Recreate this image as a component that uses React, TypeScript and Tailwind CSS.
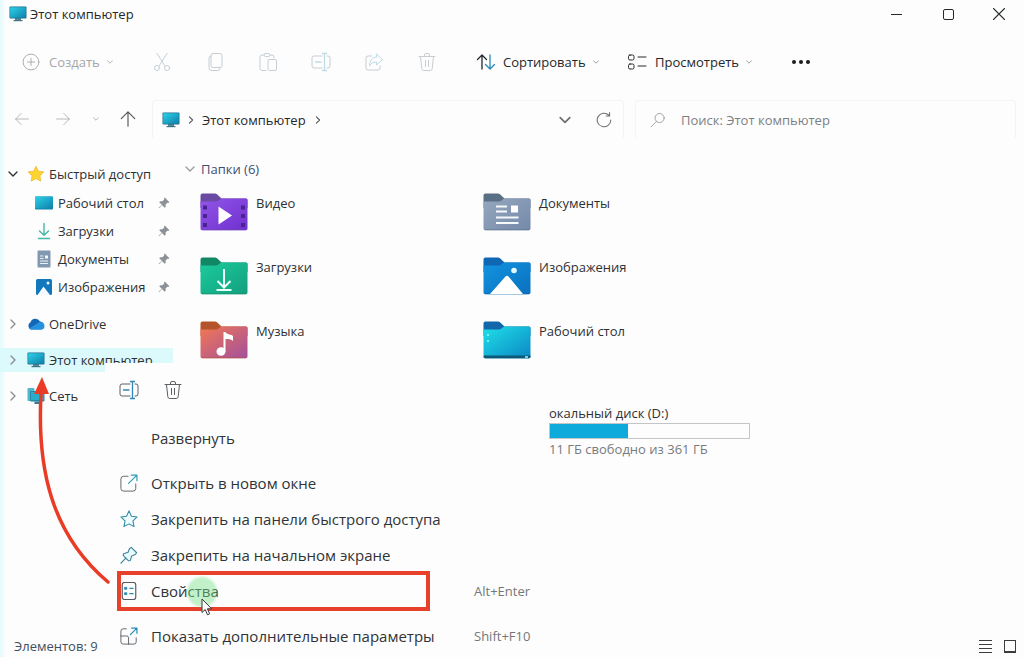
import type { ReactNode } from 'react';

type IconProps = { className?: string };

function Glyph({ className = 'size-5', children }: { className?: string; children: ReactNode }) {
  return (
    <svg viewBox="0 0 20 20" className={`shrink-0 ${className}`} fill="none" stroke="currentColor" strokeLinecap="round" strokeLinejoin="round" aria-hidden="true">
      {children}
    </svg>
  );
}

function Chevron({ className = 'size-2' }: IconProps) {
  return (
    <svg viewBox="0 0 10 10" className={`shrink-0 ${className}`} fill="none" stroke="currentColor" strokeWidth="1.4" strokeLinecap="round" strokeLinejoin="round" aria-hidden="true">
      <path d="M1 3l4 4 4-4" />
    </svg>
  );
}

function ChevronRight({ className = 'size-2.5' }: IconProps) {
  return (
    <svg viewBox="0 0 10 10" className={`shrink-0 ${className}`} fill="none" stroke="currentColor" strokeWidth="1.4" strokeLinecap="round" strokeLinejoin="round" aria-hidden="true">
      <path d="M3 1l4 4-4 4" />
    </svg>
  );
}

function RenameIcon({ accent = '#2f86b5' }: { accent?: string }) {
  return (
    <Glyph>
      <path d="M11 4H3a2 2 0 0 0-2 2v8a2 2 0 0 0 2 2h8M16 4h1a2 2 0 0 1 2 2v8a2 2 0 0 1-2 2h-1" />
      <path d="M4.500 10H10M13.500 1.500v17M11.500 1.500h4M11.500 18.500h4" stroke={accent} strokeWidth="1.300" />
    </Glyph>
  );
}

function TrashIcon() {
  return (
    <Glyph>
      <path d="M2 4.500h16M7.500 4.500V3a1.500 1.500 0 0 1 1.500-1.500h2A1.500 1.500 0 0 1 12.500 3v1.500M3.500 4.500l1.300 12.200A2 2 0 0 0 6.800 18.500h6.400a2 2 0 0 0 2-1.800l1.300-12.200M8.500 8.500v6M11.500 8.500v6" />
    </Glyph>
  );
}

function MonitorIcon({ className = 'size-[18px]' }: IconProps) {
  return (
    <svg viewBox="0 0 18 18" className={`shrink-0 ${className}`} aria-hidden="true">
      <defs>
        <linearGradient id="screen" x1="0" y1="0" x2="1" y2="1">
          <stop offset="0" stopColor="#2ad2ea" />
          <stop offset="1" stopColor="#0f7fa8" />
        </linearGradient>
      </defs>
      <path d="M6 13h6v2.500H6z" fill="#5b8794" />
      <path d="M4.500 15h9v1.200h-9z" fill="#3f7486" />
      <rect x="0.500" y="1.500" width="17" height="12" rx="1" fill="#216f89" />
      <rect x="1.200" y="2.200" width="15.600" height="10.600" rx="0.500" fill="url(#screen)" />
    </svg>
  );
}

function StarFilledIcon() {
  return (
    <svg viewBox="0 0 18 18" className="size-[18px] shrink-0" aria-hidden="true">
      <path d="M9 1.200l2.400 5 5.500.7-4 3.800 1 5.500L9 13.600l-4.900 2.600 1-5.500-4-3.800 5.500-.7z" fill="#fbd42f" stroke="#efbd3a" strokeWidth="0.800" strokeLinejoin="round" />
    </svg>
  );
}

function DesktopIcon() {
  return (
    <svg viewBox="0 0 18 18" className="size-[18px] shrink-0" aria-hidden="true">
      <rect x="0" y="2.500" width="18" height="13" rx="1" fill="#1284ad" />
      <rect x="0" y="2.500" width="18" height="12" rx="1" fill="url(#screen)" />
    </svg>
  );
}

function DownloadIcon() {
  return (
    <svg viewBox="0 0 18 18" className="size-[18px] shrink-0" fill="none" stroke="#42b9a3" strokeWidth="1.400" strokeLinecap="round" strokeLinejoin="round" aria-hidden="true">
      <path d="M9 1.500v11.500M4.500 9L9 13.200 13.500 9M3.500 16.500h11" />
    </svg>
  );
}

function DocumentIcon() {
  return (
    <svg viewBox="0 0 18 18" className="size-[18px] shrink-0" aria-hidden="true">
      <rect x="2.500" y="0.500" width="13" height="17" rx="1" fill="#8298b0" />
      <path d="M5 6h3.500M5 8.500h3.500M5 11h8M5 13.500h8" stroke="#e8eef5" />
      <rect x="10" y="5.500" width="3" height="3" fill="#f4f8fc" />
    </svg>
  );
}

function PictureIcon() {
  return (
    <svg viewBox="0 0 18 18" className="size-[18px] shrink-0" aria-hidden="true">
      <rect x="1" y="1" width="16" height="16" rx="1.500" fill="#1377bd" />
      <path d="M2.500 17L8.500 8.500 15 17z" fill="#f2faff" />
      <circle cx="13" cy="5" r="1.500" fill="#f2faff" />
    </svg>
  );
}

function CloudIcon() {
  return (
    <svg viewBox="0 0 18 18" className="size-[18px] shrink-0" aria-hidden="true">
      <path d="M4 14.500a4 4 0 0 1-.5-7.300A5.200 5.200 0 0 1 13 6.500a4.200 4.200 0 0 1 1.500 8z" fill="#1466b8" />
      <path d="M2 13.500l9-5.500a4 4 0 0 1 6.500 3.500 3.300 3.300 0 0 1-3 3H4a3.500 3.500 0 0 1-2-1z" fill="#2492df" />
    </svg>
  );
}

function NetworkIcon() {
  return (
    <svg viewBox="0 0 18 18" className="size-[18px] shrink-0" aria-hidden="true">
      <rect x="0.500" y="1" width="7" height="13" rx="1" fill="#52b6cd" />
      <rect x="3" y="4" width="14.500" height="10.500" rx="1" fill="#2389a6" />
      <rect x="4" y="5" width="12.500" height="8" fill="#27aecb" />
      <path d="M7.500 14.500h5.500V17H7.500z" fill="#397c90" />
    </svg>
  );
}

function PinnedIcon() {
  return (
    <svg viewBox="0 0 12 12" className="size-3 shrink-0" aria-hidden="true">
      <path d="M6.800.6l4.600 4.600-1.200.8-.9-.2-1.700 1.700.1 2.200-1 1-2.700-2.700L1 11.200l-.4-.4L3.800 7.800 1.200 5.200l1-1 2.300.1L6.200 2.600 6 1.600z" fill="#8c9298" />
    </svg>
  );
}

function FolderIcon({ id, tab, from, to, children }: { id: string; tab: string; from: string; to: string; children?: ReactNode }) {
  return (
    <svg viewBox="0 0 48 38" className="h-[38px] w-12 shrink-0" aria-hidden="true">
      <defs>
        <linearGradient id={id} x1="0" y1="0" x2="1" y2="1">
          <stop offset="0" stopColor={from} />
          <stop offset="1" stopColor={to} />
        </linearGradient>
      </defs>
      <path d="M0.500 2.500a2 2 0 0 1 2-2H15a3 3 0 0 1 2 .8L21.500 5.500H46a1.500 1.500 0 0 1 1.500 1.500v8H.5z" fill={tab} />
      <path d="M.5 8.500h15.500a4 4 0 0 0 2.500-.9L21 5.500h25A1.500 1.500 0 0 1 47.500 7v28.500A1.800 1.800 0 0 1 45.700 37.300H2.300A1.800 1.800 0 0 1 .5 35.500z" fill={`url(#${id})`} />
      <path d="M1 36.200a1.800 1.800 0 0 0 1.300 1.100h43.400a1.800 1.800 0 0 0 1.300-1.100z" fill={tab} opacity="0.6" />
      {children}
    </svg>
  );
}

const quickAccess = [
  { label: 'Рабочий стол', icon: <DesktopIcon /> },
  { label: 'Загрузки', icon: <DownloadIcon /> },
  { label: 'Документы', icon: <DocumentIcon /> },
  { label: 'Изображения', icon: <PictureIcon /> },
];

const roots = [
  { label: 'OneDrive', icon: <CloudIcon />, selected: false },
  { label: 'Этот компьютер', icon: <MonitorIcon />, selected: true },
  { label: 'Сеть', icon: <NetworkIcon />, selected: false },
];

const folders = [
  {
    label: 'Видео',
    icon: (
      <FolderIcon id="video" tab="#6b4aa3" from="#9256e6" to="#6f2fd0">
        <path d="M18.500 13.500v18L32 22.500z" fill="#fff" />
        <path d="M3 12.500h4v4H3zM3 21h4v4H3zM3 30h4v4H3zM41 12.500h4v4h-4zM41 21h4v4h-4zM41 30h4v4h-4z" fill="#4a2391" />
      </FolderIcon>
    ),
  },
  {
    label: 'Документы',
    icon: (
      <FolderIcon id="documents" tab="#596f83" from="#96a8bd" to="#7488ab">
        <path d="M13 13.500h11M13 18.500h11M13 24.500h22.500M13 30h22.500" stroke="#f6f9fc" strokeWidth="2" />
        <path d="M28 12.500h7v7h-7z" fill="#fff" />
      </FolderIcon>
    ),
  },
  {
    label: 'Загрузки',
    icon: (
      <FolderIcon id="downloads" tab="#128766" from="#1bcb9c" to="#139f7e">
        <path d="M24 12v18M17.500 24l6.500 6.500 6.500-6.500M16.500 33h15" fill="none" stroke="#eafff8" strokeWidth="2" />
      </FolderIcon>
    ),
  },
  {
    label: 'Изображения',
    icon: (
      <FolderIcon id="pictures" tab="#0f66b3" from="#1294e0" to="#0b70bd">
        <path d="M7 37l15.500-17.500a2 2 0 0 1 3 0L40 37z" fill="#fff" />
        <circle cx="31" cy="13.500" r="2.800" fill="#e4f8ff" />
      </FolderIcon>
    ),
  },
  {
    label: 'Музыка',
    icon: (
      <FolderIcon id="music" tab="#b5532a" from="#f27752" to="#a2509f">
        <ellipse cx="21" cy="30.500" rx="4.500" ry="4.300" fill="#fff" />
        <path d="M23.500 11h2c1 3 6.500 2 7.500 4v5c-2-2-5-2-7.500-2v12.500h-2z" fill="#fff" />
      </FolderIcon>
    ),
  },
  {
    label: 'Рабочий стол',
    icon: (
      <FolderIcon id="desktop" tab="#1167a9" from="#1fe0e8" to="#0b86c4">
        <path d="M1 34.500h46.500v1.300a1.600 1.600 0 0 1-1.600 1.500H2.100A1.600 1.600 0 0 1 .5 35.800z" fill="#0d5877" />
        <path d="M4 14h2M4 20h2M42 36h3" stroke="#9ffaf6" strokeWidth="1.500" />
      </FolderIcon>
    ),
  },
];

const menuItems = [
  {
    label: 'Открыть в новом окне',
    icon: (
      <Glyph className="size-[18px]">
        <path d="M9 2.500H4a3 3 0 0 0-3 3V16a3 3 0 0 0 3 3h10.500a3 3 0 0 0 3-3v-5" />
        <path d="M9.500 10.500L18.500 1.500M12.500 1.200h6.300v6.300" stroke="#2f9db5" strokeWidth="1.300" />
      </Glyph>
    ),
  },
  {
    label: 'Закрепить на панели быстрого доступа',
    icon: (
      <Glyph className="size-[18px]">
        <path d="M10 1l2.700 5.900 6.300.8-4.600 4.400 1.200 6.400L10 15.400l-5.600 3.100 1.200-6.400L1 7.700l6.300-.8z" stroke="#2f8ea8" strokeWidth="1.200" fill="#effcff" />
      </Glyph>
    ),
  },
  {
    label: 'Закрепить на начальном экране',
    icon: (
      <Glyph className="size-[18px]">
        <path d="M12.500 1.500l6 6-1.500 2-4 1.500-1.500 5-2 .5L3.500 10.500l.5-2 5-1.500L10.500 3z" stroke="#3a8299" strokeWidth="1.200" fill="#e8fbff" />
        <path d="M6.500 13.500L1 19" stroke="#3a8299" strokeWidth="1.300" />
      </Glyph>
    ),
  },
  {
    label: 'Свойства',
    shortcut: 'Alt+Enter',
    highlighted: true,
    icon: (
      <Glyph className="size-[18px]">
        <rect x="2.500" y="0.500" width="15" height="19" rx="2.500" strokeWidth="1.300" />
        <path d="M5.500 6h2v2h-2zM5.500 12h2v2h-2z" fill="#2389b5" stroke="#2389b5" />
        <path d="M11 7h3.500M11 13h3.500" stroke="#2389b5" strokeWidth="1.300" />
      </Glyph>
    ),
  },
];

function MenuRow({ label, icon, shortcut, highlighted }: { label: string; icon?: ReactNode; shortcut?: string; highlighted?: boolean }) {
  return (
    <li className="relative">
      <button className="flex h-9 w-full items-center pl-[15px] text-left">
        <span className="flex w-[31px] shrink-0 items-center text-[#555b60]">{icon}</span>
        <span className="w-[323px] shrink-0 text-[15px] whitespace-nowrap">{label}</span>
        {shortcut && <span className="text-[#74777a]">{shortcut}</span>}
      </button>
      {highlighted && (
        <>
          <span className="pointer-events-none absolute -top-0.5 left-3 h-10 w-[313px] border-4 border-[#e8412b]" />
          <span className="pointer-events-none absolute top-1 left-[82px] size-[30px] rounded-full bg-[#7be08a]/45 blur-[1px]" />
          <svg viewBox="0 0 12 18" className="pointer-events-none absolute top-[25px] left-24 h-[18px] w-3" aria-hidden="true">
            <path d="M1 1v13.500l3.200-3 2.300 5.300 2.200-1-2.300-5h4.300z" fill="#fff" stroke="#34383b" strokeLinejoin="round" />
          </svg>
        </>
      )}
    </li>
  );
}

function ContextMenu() {
  return (
    <div className="absolute top-[363px] left-[105px] w-[442px] bg-[#fdfdfd] pt-[9px] text-[#303437]">
      <div className="flex h-9 items-center gap-6 pl-3.5 text-[#5c6165]">
        <button aria-label="Переименовать"><RenameIcon /></button>
        <button aria-label="Удалить"><TrashIcon /></button>
      </div>
      <ul className="pt-3">
        <MenuRow label="Развернуть" />
      </ul>
      <ul className="pt-[9px]">
        {menuItems.map(item => <MenuRow key={item.label} {...item} />)}
      </ul>
      <ul className="pt-[9px]">
        <MenuRow
          label="Показать дополнительные параметры"
          shortcut="Shift+F10"
          icon={
            <Glyph className="size-[18px]">
              <path d="M7 2H3.500A2.500 2.500 0 0 0 1 4.500v12A2.500 2.500 0 0 0 3.500 19h12a2.500 2.500 0 0 0 2.500-2.500V12M1 10h6.500a2 2 0 0 1 2 2v7" />
              <path d="M11.500 8.500L18.500 1.500M13 1.200h5.800V7" stroke="#2389b5" strokeWidth="1.300" />
            </Glyph>
          }
        />
      </ul>
    </div>
  );
}

function TitleBar() {
  return (
    <header className="flex h-7 items-center pl-[9px] text-[#25282a]">
      <MonitorIcon />
      <h1 className="ml-[3px] flex-1">Этот компьютер</h1>
      <div className="flex h-full">
        <button aria-label="Свернуть" className="flex w-[52px] items-center justify-center">
          <span className="h-px w-[11px] bg-[#25282a]" />
        </button>
        <button aria-label="Развернуть окно" className="flex w-[52px] items-center justify-center">
          <span className="size-[11px] rounded-[2px] border border-[#25282a]" />
        </button>
        <button aria-label="Закрыть" className="flex w-[50px] items-center justify-center">
          <Glyph className="size-3"><path d="M1 1l18 18M19 1L1 19" strokeWidth="2.200" /></Glyph>
        </button>
      </div>
    </header>
  );
}

function Toolbar() {
  return (
    <div className="mt-0.5 flex h-16 items-center pl-[22px] text-[#25282a]">
      <button className="flex w-[130px] items-center text-[#a3a7aa]">
        <Glyph className="size-[18px]">
          <circle cx="10" cy="10" r="8.800" />
          <path d="M10 6v8M6 10h8" />
        </Glyph>
        <span className="ml-[9px]">Создать</span>
        <Chevron className="ml-[7px] size-1.5" />
      </button>
      <div className="flex w-[324px] items-center gap-[33px] text-[#c6ced3]">
        <button aria-label="Вырезать">
          <Glyph>
            <path d="M5 1.500l8 12.500M15 1.500L7 14" />
            <circle cx="5" cy="16" r="2.500" />
            <circle cx="15" cy="16" r="2.500" />
          </Glyph>
        </button>
        <button aria-label="Копировать">
          <Glyph>
            <rect x="6" y="1.500" width="11" height="14" rx="2" />
            <path d="M6 4a2 2 0 0 0-2 2v9.500a3 3 0 0 0 3 3h6a2 2 0 0 0 2-2" />
          </Glyph>
        </button>
        <button aria-label="Вставить">
          <Glyph>
            <path d="M8 18.500H4a2 2 0 0 1-2-2V5a2 2 0 0 1 2-2h2M12 3h2a2 2 0 0 1 2 2v1" />
            <rect x="6" y="1.500" width="6" height="3" rx="1.500" />
            <rect x="10" y="7.500" width="8.500" height="11" rx="1.500" />
          </Glyph>
        </button>
        <button aria-label="Переименовать"><RenameIcon accent="#bfdbe6" /></button>
        <button aria-label="Поделиться">
          <Glyph>
            <path d="M8 4H4a2 2 0 0 0-2 2v10a2 2 0 0 0 2 2h10a2 2 0 0 0 2-2v-2" />
            <path d="M12.500 2l6 5.500-6 5.500V10C9 10 7 11 5.500 14c0-5 2.500-8.500 7-9z" stroke="#bfdbe6" />
          </Glyph>
        </button>
        <button aria-label="Удалить"><TrashIcon /></button>
      </div>
      <button className="flex w-[151px] items-center">
        <Glyph>
          <path d="M6 17V3M1.500 7.500L6 3l4.500 4.500" strokeWidth="1.300" />
          <path d="M14 3v14M9.500 12.500L14 17l4.500-4.500" stroke="#258db5" strokeWidth="1.300" />
        </Glyph>
        <span className="ml-[7px]">Сортировать</span>
        <Chevron className="ml-[7px] size-1.5 text-[#8b8f92]" />
      </button>
      <button className="flex w-[161px] items-center">
        <Glyph>
          <rect x="1.500" y="3" width="5.500" height="5" rx="1.500" />
          <rect x="1.500" y="12" width="5.500" height="5" rx="1.500" />
          <path d="M11 5h8M11 14h8" />
        </Glyph>
        <span className="ml-2">Просмотреть</span>
        <Chevron className="ml-[7px] size-1.5 text-[#8b8f92]" />
      </button>
      <button aria-label="Дополнительно" className="flex gap-[3px] px-1">
        <span className="size-1 rounded-full bg-[#1b1d1f]" />
        <span className="size-1 rounded-full bg-[#1b1d1f]" />
        <span className="size-1 rounded-full bg-[#1b1d1f]" />
      </button>
    </div>
  );
}

function AddressRow() {
  return (
    <div className="mt-1.5 flex h-[38px] items-center pr-2 pl-3.5 text-[#25282a]">
      <div className="flex w-[138px] shrink-0 items-center text-[#a3a7aa]">
        <button aria-label="Назад"><Glyph className="size-4"><path d="M18 10H2M9 3l-7 7 7 7" /></Glyph></button>
        <button aria-label="Вперёд" className="ml-[25px]"><Glyph className="size-4"><path d="M2 10h16M11 3l7 7-7 7" /></Glyph></button>
        <button aria-label="Последние расположения" className="ml-[22px]"><Chevron className="size-1.5" /></button>
        <button aria-label="Вверх" className="ml-5 text-[#55595c]"><Glyph className="size-[18px]"><path d="M10 18V2M2.500 9.500L10 2l7.500 7.500" strokeWidth="1.300" /></Glyph></button>
      </div>
      <div className="flex h-full w-[472px] shrink-0 items-center rounded-t border border-b-0 border-[#f3f4f4] pl-[9px]">
        <MonitorIcon />
        <ChevronRight className="ml-[7px] size-2 text-[#55595c]" />
        <button className="ml-[7px]">Этот компьютер</button>
        <ChevronRight className="ml-2 size-2 text-[#55595c]" />
        <button aria-label="Журнал" className="mr-[25px] ml-auto text-[#6b6f72]"><Chevron className="size-3" /></button>
        <button aria-label="Обновить" className="mr-[11px] text-[#6b6f72]">
          <Glyph className="size-4">
            <path d="M18.500 10a8.500 8.500 0 1 1-2.500-6M17 .8V5h-4.200" strokeWidth="1.300" />
          </Glyph>
        </button>
      </div>
      <label className="ml-[11px] flex h-full flex-1 items-center rounded-t border border-b-0 border-[#f3f4f4] pl-3.5 text-[#8c9093]">
        <Glyph className="size-4">
          <circle cx="12" cy="7.500" r="5.700" />
          <path d="M8 11.800L1.500 18.500" />
        </Glyph>
        <input type="search" aria-label="Поиск" placeholder="Поиск: Этот компьютер" className="ml-[15px] w-full min-w-0 bg-transparent outline-none placeholder:text-[#7c8083]" />
      </label>
    </div>
  );
}

function Sidebar() {
  return (
    <nav className="w-[173px] shrink-0 text-[#2d3134]">
      <button className="flex h-[30px] items-center pl-2 whitespace-nowrap">
        <Chevron className="size-2.5" />
        <span className="mr-[4px] ml-[9px]"><StarFilledIcon /></span>
        Быстрый доступ
      </button>
      <ul>
        {quickAccess.map(item => (
          <li key={item.label}>
            <button className="flex h-7 w-full items-center gap-[5px] pr-[3px] pl-[35px] text-left whitespace-nowrap">
              {item.icon}
              <span className="flex-1">{item.label}</span>
              <PinnedIcon />
            </button>
          </li>
        ))}
      </ul>
      <ul className="mt-[5px]">
        {roots.map(root => (
          <li key={root.label} className="flex h-9 items-center">
            <button className={`flex h-6 w-full items-center pl-2 whitespace-nowrap ${root.selected ? 'bg-[#dcf9fc]' : ''}`}>
              <ChevronRight className="size-2.5 text-[#8b8f92]" />
              <span className="mr-[4px] ml-[9px]">{root.icon}</span>
              {root.label}
            </button>
          </li>
        ))}
      </ul>
    </nav>
  );
}

function DriveTile() {
  const used = 39;
  return (
    <div className="mt-[18px] ml-[349px] w-[201px]">
      <div className="leading-5 text-[#2d3134]">окальный диск (D:)</div>
      <div role="meter" aria-label="Занято на диске" aria-valuenow={used} aria-valuemin={0} aria-valuemax={100} className="h-4 border border-[#c3c5c6]">
        <div className="h-full bg-[#0eaadb]" style={{ width: `${used}%` }} />
      </div>
      <div className="leading-5 whitespace-nowrap text-[#787b7e]">11 ГБ свободно из 361 ГБ</div>
    </div>
  );
}

export default function App() {
  return (
    <div className="relative flex min-h-screen flex-col overflow-hidden bg-[#fdfdfd] bg-linear-to-r from-[#e2fafb] to-[#fdfdfd] to-[6px] font-['Open_Sans','Noto_Sans',sans-serif] text-[13px] leading-5">
      <TitleBar />
      <Toolbar />
      <AddressRow />
      <div className="flex flex-1 pt-[21px]">
        <Sidebar />
        <main className="min-w-0 flex-1 pl-[27px]">
          <button className="-ml-[15px] flex items-center gap-1.5 text-[#3c4f73]">
            <Chevron className="size-2.5 text-[#9a9ea1]" />
            Папки (6)
          </button>
          <ul className="mt-3.5 grid grid-cols-[283px_283px]">
            {folders.map(folder => (
              <li key={folder.label} className="h-16">
                <button className="flex items-start gap-2 text-[#2d3134]">
                  {folder.icon}
                  {folder.label}
                </button>
              </li>
            ))}
          </ul>
          <DriveTile />
        </main>
      </div>
      <footer className="flex h-[22px] items-center pr-2 pl-3.5 text-[#40505f]">
        <span className="flex-1">Элементов: 9</span>
        <button aria-label="Таблица" className="flex w-[13px] flex-col gap-[3px]">
          <span className="h-px bg-[#3a3d40]" />
          <span className="h-px bg-[#3a3d40]" />
          <span className="h-px bg-[#3a3d40]" />
          <span className="h-px bg-[#3a3d40]" />
        </button>
        <button aria-label="Крупные значки" className="ml-3 h-[13px] w-3 border border-b-2 border-[#3a3d40]" />
      </footer>
      <ContextMenu />
      <svg viewBox="0 0 80 210" className="pointer-events-none absolute top-[376px] left-[31px] h-[210px] w-20" aria-hidden="true">
        <path d="M10 18C6 92 20 158 77 206" fill="none" stroke="#ea3b26" strokeWidth="3.500" strokeLinecap="round" />
        <path d="M11 1L18 18H3z" fill="#ea3b26" />
      </svg>
    </div>
  );
}
